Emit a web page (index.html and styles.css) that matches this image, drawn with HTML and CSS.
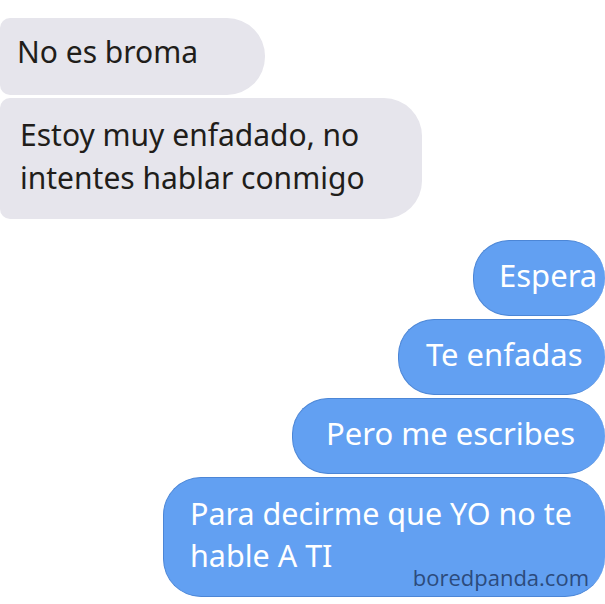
FILE: index.html
```html
<!DOCTYPE html>
<html lang="es">
<head>
  <meta charset="UTF-8" />
  <meta name="viewport" content="width=device-width, initial-scale=1" />
  <title>No es broma</title>
  <link rel="stylesheet" href="styles.css">
</head>
<body>
  <div class="chat">
    <div class="msg in w-broma">No es broma</div>
    <div class="msg in w-enfadado">Estoy muy enfadado, no<br>intentes hablar conmigo</div>

    <div class="msg out first w-espera">Espera</div>
    <div class="msg out w-enfadas">Te enfadas</div>
    <div class="msg out w-escribes">Pero me escribes</div>
    <div class="msg out w-decirme">
      Para decirme que YO no te<br>hable A TI
      <span class="watermark">boredpanda.com</span>
    </div>
  </div>
</body>
</html>
```

FILE: styles.css
```css
body {
  margin: 0;
  background: #fff;
  font-family: 'Noto Sans', 'Open Sans', sans-serif;
  overflow: hidden;
}
.chat {
  display: flex;
  flex-direction: column;
  gap: 3px;
  padding-top: 18px;
  width: 605px;
}
.msg {
  box-sizing: border-box;
  font-size: 30px;
  line-height: 44px;
  padding: 13px 0 18px 27px;
  border-radius: 38px;
}
/* received, grey */
.msg.in {
  align-self: flex-start;
  background: #e6e5ec;
  color: #211d1a;
  padding-left: 17px;
  border-radius: 10px 38px 38px 10px;
}
.w-broma {
  width: 265px;
  height: 77px;
  padding-top: 12px;
}
.w-enfadado {
  width: 422px;
  height: 121px;
  padding-top: 15px;
  padding-left: 20px !important;
  line-height: 43px;
}
/* sent, blue */
.msg.out {
  align-self: flex-end;
  background: #62a0f2;
  color: #fff;
  font-size: 31px;
  border: 1px solid #4c86d6;
  border-right: none;
  border-radius: 38px 40px 40px 38px;
  height: 76px;
  padding-top: 12px;
}
.msg.out.first {
  margin-top: 18px;
}
.w-espera { width: 132px; padding-left: 25px; }
.w-enfadas { width: 207px; }
.w-escribes { width: 313px; padding-left: 33px; }
.w-decirme {
  position: relative;
  width: 442px;
  height: 120px !important;
  font-size: 30.5px !important;
  line-height: 42px;
  padding-top: 14px !important;
  padding-left: 26px !important;
}
.watermark {
  position: absolute;
  right: 16px;
  bottom: 8px;
  font-family: 'Open Sans', sans-serif;
  font-size: 22px;
  line-height: 22px;
  color: #2c4b7c;
}
```
